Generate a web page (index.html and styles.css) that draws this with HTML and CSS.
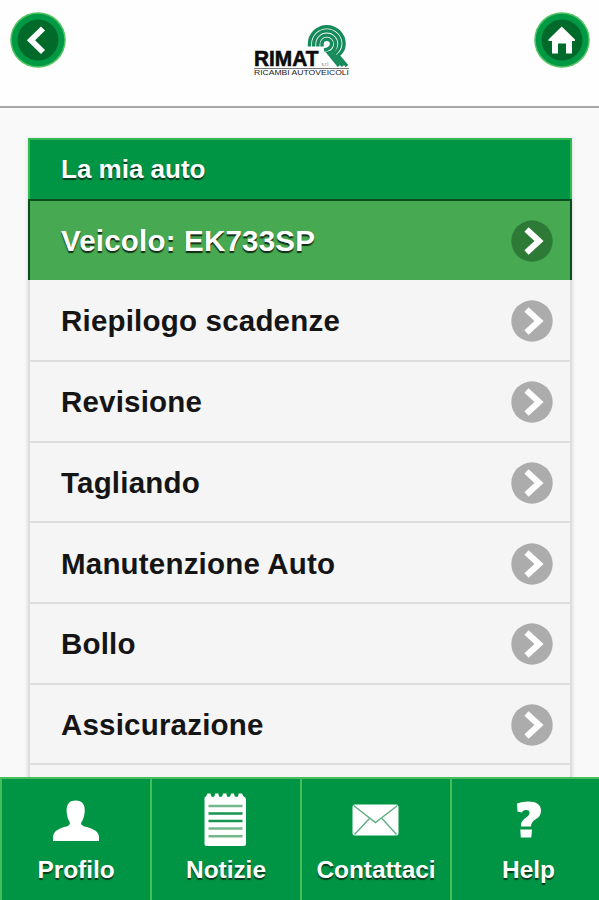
FILE: index.html
```html
<!DOCTYPE html>
<html lang="it">
<head>
<meta charset="utf-8">
<title>Rimat - La mia auto</title>
<link rel="stylesheet" href="styles.css">
</head>
<body>
<svg class="defs" width="0" height="0">
  <symbol id="go" viewBox="0 0 42 42"><circle cx="21" cy="21" r="20.700" fill="currentColor"/><path d="M15.500 9.500L28 21L15.500 32.500" fill="none" stroke="#fff" stroke-width="6.200"/></symbol>
</svg>
<div class="app">
  <header class="top">
    <a class="round"><svg viewBox="0 0 56 56"><circle cx="28" cy="28" r="27.800" fill="#52c464"/><circle cx="28" cy="28" r="26.300" fill="#009a45"/><circle cx="28" cy="28" r="20.500" fill="#006a2a"/><path d="M33 16.500L21 28.200L33 40" fill="none" stroke="#fff" stroke-width="5.800"/></svg></a>
    <svg class="logo" viewBox="0 0 100 56">
      <g fill="none" stroke="#168a5b" stroke-width="3.400">
        <path d="M55.500 22.500V20A17.300 17.300 0 0 1 90.100 20Q90 27 84 31.500L93 42"/>
        <path d="M59.700 22.500V20A13.100 13.100 0 0 1 85.900 20Q85.500 26 79.500 30.500L89 42"/>
        <path d="M63.900 22.500V20A8.900 8.900 0 0 1 81.700 20Q81 28 74.500 29L85 42"/>
        <path d="M68 22.500V20A4.800 4.800 0 0 1 77.600 20Q77 25 70 26"/>
      </g>
      <text class="brand" x="0" y="42" textLength="64.500" lengthAdjust="spacingAndGlyphs">RIMAT</text>
      <text class="srl" x="67.500" y="42" textLength="8" lengthAdjust="spacingAndGlyphs">s.r.l.</text>
      <path d="M0 44.500H95" stroke="#777" stroke-width="1"/>
      <text class="tag" x="0" y="51.400" textLength="95" lengthAdjust="spacingAndGlyphs">RICAMBI AUTOVEICOLI</text>
    </svg>
    <a class="round"><svg viewBox="0 0 56 56"><circle cx="28" cy="28" r="27.800" fill="#52c464"/><circle cx="28" cy="28" r="26.300" fill="#009a45"/><circle cx="28" cy="28" r="20.500" fill="#006a2a"/><path d="M27.700 14.500L41 27.500V29H38V41.500H32V31.500H24V41.500H18V29H14.500V27.500Z" fill="#fff"/></svg></a>
  </header>
  <main>
    <ul class="list">
      <li class="divider"><span>La mia auto</span></li>
      <li class="row active"><span>Veicolo: EK733SP</span><svg class="go"><use href="#go"/></svg></li>
      <li class="row first"><span>Riepilogo scadenze</span><svg class="go"><use href="#go"/></svg></li>
      <li class="row"><span>Revisione</span><svg class="go"><use href="#go"/></svg></li>
      <li class="row"><span>Tagliando</span><svg class="go"><use href="#go"/></svg></li>
      <li class="row"><span>Manutenzione Auto</span><svg class="go"><use href="#go"/></svg></li>
      <li class="row"><span>Bollo</span><svg class="go"><use href="#go"/></svg></li>
      <li class="row"><span>Assicurazione</span><svg class="go"><use href="#go"/></svg></li>
      <li class="row"></li>
    </ul>
  </main>
  <nav class="tabs">
    <a class="tab"><svg viewBox="0 0 56 60"><path d="M5 51V46Q6 40 16 37Q22 36 22 33Q19 28 18.600 22Q18 10.500 27.500 10.500Q37.500 10.500 36.700 22Q36 29 33 33Q33 36 39 37Q50 40 51 46V51Z" fill="#fff"/></svg><span>Profilo</span></a>
    <a class="tab"><svg viewBox="1.500 0 56 60"><path d="M8 8Q8 6.500 9.500 6.500L11 3.500H14Q14.500 7 16.500 7Q18.500 7 18.500 3.500H22Q22 7 24 7Q26 7 26.500 3.500H30Q30 7 32 7Q34 7 34.500 3.500H37.500Q38 7 40 7Q42 7 42 3.500H45.500L47 6.500Q49.500 7 49.500 9V54Q49.500 56 47.500 56H10Q8 56 8 54Z" fill="#fff"/><g stroke-width="2.400"><path d="M12 16H46M12 38.500H46M12 46.300H46" stroke="#72b88b"/><path d="M12 23.500H46M12 31H46" stroke="#159650"/></g></svg><span>Notizie</span></a>
    <a class="tab"><svg viewBox="0.500 0 56 60"><rect x="5" y="14.500" width="46" height="31" rx="2.500" fill="#fff"/><path d="M6 15.500L28 32.500L50 15.500M7 44.500L22 28.500M49 44.500L34.500 28.500" fill="none" stroke="#5fae86" stroke-width="1.400"/></svg><span>Contattaci</span></a>
    <a class="tab help"><svg viewBox="1 0 56 60"><path d="M17 13.500Q22 11.500 28 11.500Q41 11.500 41 21Q41 26 36 29Q31 32 31 36.500H21Q20.500 31 26 27.500Q30 25 29.500 22Q29 19.500 25.500 20Q22.500 20.300 21.800 22.500L17.500 21.500ZM20.300 39.500H32L31.300 47.500H20.800Z" fill="#fff"/></svg><span>Help</span></a>
  </nav>
</div>
</body>
</html>
```
FILE: styles.css
```css
* { box-sizing: border-box; }
body {
  margin: 0;
  font-family: "Liberation Sans", Arial, sans-serif;
  font-weight: bold;
}
.defs { display: block; }
.app {
  width: 599px;
  height: 900px;
  display: flex;
  flex-direction: column;
  overflow: hidden;
  background: #f9f9f9;
}
.top {
  flex: none;
  height: 108px;
  padding: 12px 9px 0 10px;
  display: flex;
  justify-content: space-between;
  align-items: flex-start;
  background: #fefefe;
  border-bottom: 2px solid #a8a8a8;
}
.round, .round svg { display: block; width: 56px; height: 56px; }
.logo { width: 100px; height: 56px; margin: 12px 0 0 8px; }
.brand { font-size: 21.500px; fill: #0c0c0c; stroke: #0c0c0c; stroke-width: .6px; }
.srl { font-size: 5px; fill: #777; font-weight: normal; }
.tag { font-size: 6.500px; fill: #222; font-weight: normal; }
main {
  flex: 1;
  min-height: 0;
  padding: 30px 27px 0 28px;
  overflow: hidden;
}
.list {
  list-style: none;
  margin: 0;
  padding: 0;
  box-shadow: 0 1px 4px rgba(0, 0, 0, .16);
}
.divider {
  height: 61px;
  padding-left: 31px;
  display: flex;
  align-items: center;
  background: #009445;
  border: 2px solid #2fb94f;
  border-bottom: 0;
  color: #fff;
  font-size: 26px;
  text-shadow: 0 2px 1px rgba(0, 0, 0, .6);
}
.row {
  height: 80.700px;
  padding: 2px 17px 0 31px;
  display: flex;
  align-items: center;
  justify-content: space-between;
  background: #f5f5f5;
  border: 2px solid #dedede;
  border-top: 0;
  color: #151515;
  font-size: 29.500px;
  letter-spacing: .2px;
}
.row.first { height: 82.200px; }
.row.active {
  background: #47a951;
  border: 2px solid #0b4f20;
  border-bottom: 0;
  color: #fff;
  text-shadow: 0 2px 1px rgba(0, 0, 0, .75);
}
.go { flex: none; width: 42px; height: 42px; color: #acacac; }
.active .go { color: #2d7a37; }
.tabs {
  flex: none;
  height: 123px;
  display: grid;
  grid-template-columns: 150px 150px 150px 149px;
  background: #009445;
  border-top: 2px solid #46bf5a;
}
.tab {
  border-left: 2px solid #46bf5a;
  display: flex;
  flex-direction: column;
  align-items: center;
  padding-top: 11px;
  color: #fff;
  font-size: 24.400px;
  text-shadow: 0 2px 1px rgba(0, 0, 0, .6);
}
.tab.help { padding-left: 6px; }
.tab svg { width: 56px; height: 60px; }
.tab span { line-height: 30px; margin-top: 5px; }
```
